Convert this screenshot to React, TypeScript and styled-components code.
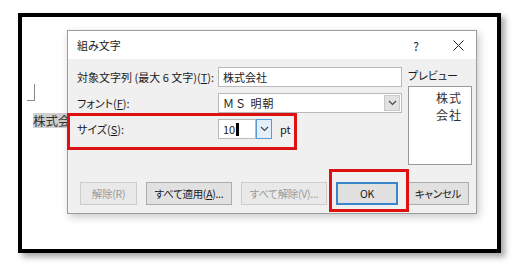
import React from "react";
import styled, { createGlobalStyle } from "styled-components";

const Global = createGlobalStyle`
  html, body { margin: 0; padding: 0; background: #ffffff; }
  body { font-family: "Noto Sans CJK JP", "Noto Sans", sans-serif; }
  * { box-sizing: border-box; }
`;

const Page = styled.div`
  width: 522px;
  height: 264px;
  padding: 13px 0 0 18px;
`;

const Frame = styled.div`
  position: relative;
  width: 483px;
  height: 240px;
  border: 4px solid #000;
  background: #fff;
  box-shadow: 4px 4px 6px rgba(0, 0, 0, 0.35);
  display: flex;
  align-items: flex-start;
`;

const DocColumn = styled.div`
  width: 45px;
  flex: none;
  padding-top: 67px;
  display: flex;
  flex-direction: column;
  align-items: flex-start;
`;

const CropMark = styled.div`
  width: 8px;
  height: 17px;
  margin-left: 5px;
  border-right: 1px solid #8a8a8a;
  border-bottom: 1px solid #8a8a8a;
`;

const DocText = styled.div`
  margin-top: 12px;
  margin-left: 11px;
  height: 15px;
  background: #cfcfcf;
  font-size: 12.5px;
  line-height: 15px;
  color: #333;
  white-space: nowrap;
`;

const Dialog = styled.div`
  position: relative;
  z-index: 1;
  margin-top: 13px;
  width: 410px;
  height: 184px;
  border: 1px solid #9c9c9c;
  background: #f0f0f0;
  box-shadow: 2px 3px 8px rgba(0, 0, 0, 0.22);
  display: flex;
  flex-direction: column;
  font-size: 11px;
  font-feature-settings: "palt";
  color: #1a1a1a;
`;

const TitleBar = styled.div`
  height: 28px;
  background: #fff;
  display: flex;
  align-items: center;
  padding: 0 0 0 9px;
`;

const Title = styled.div`
  flex: 1;
  color: #222;
`;

const TitleButton = styled.div<{ $w: number }>`
  width: ${(p) => p.$w}px;
  height: 28px;
  display: flex;
  align-items: center;
  justify-content: center;
  font-size: 12px;
  color: #222;
`;

const Body = styled.div`
  flex: 1;
  display: flex;
  flex-direction: column;
  padding: 8px 4px 8px 9px;
`;

const Main = styled.div`
  display: flex;
  align-items: flex-start;
`;

const Form = styled.div`
  display: grid;
  grid-template-columns: 141px 184px;
  grid-auto-rows: 20px;
  row-gap: 6px;
  align-items: center;
`;

const Label = styled.div`
  white-space: nowrap;
`;

const Key = styled.span`
  text-decoration: underline;
`;

const TextBox = styled.div<{ $w?: number }>`
  height: 20px;
  width: ${(p) => (p.$w ? `${p.$w}px` : "100%")};
  background: #fff;
  border: 1px solid #b9b9b9;
  display: flex;
  align-items: center;
  padding-left: 4px;
  white-space: nowrap;
`;

const Combo = styled(TextBox)`
  padding-right: 1px;
  justify-content: space-between;
  letter-spacing: 1px;
  font-feature-settings: normal;
`;

const DropButton = styled.div<{ $active?: boolean }>`
  width: 16px;
  height: ${(p) => (p.$active ? "20px" : "16px")};
  background: ${(p) => (p.$active ? "#e3effa" : "#e2e2e2")};
  border: 1px solid ${(p) => (p.$active ? "#5b9bd5" : "#c9c9c9")};
  display: flex;
  align-items: center;
  justify-content: center;
  flex: none;
`;

const SizeRow = styled.div`
  display: flex;
  align-items: center;
`;

const Caret = styled.span`
  display: inline-block;
  width: 3px;
  height: 13px;
  background: #000;
  margin-left: 1px;
`;

const Unit = styled.span`
  margin-left: 8px;
`;

const Preview = styled.div`
  margin-left: 6px;
  display: flex;
  flex-direction: column;
`;

const PreviewLabel = styled.div`
  height: 17px;
  line-height: 17px;
`;

const PreviewBox = styled.div`
  margin-top: 2px;
  width: 64px;
  height: 79px;
  background: #fff;
  border: 1px solid #9a9a9a;
  padding: 2px 0 0 27px;
  font-size: 12px;
  line-height: 17px;
  letter-spacing: 1px;
  font-feature-settings: normal;
  color: #333;
`;

const Buttons = styled.div`
  margin-top: auto;
  margin-left: 3px;
  display: flex;
  gap: 9px;
`;

const Button = styled.div<{ $w: number; $disabled?: boolean; $default?: boolean }>`
  width: ${(p) => p.$w}px;
  height: 23px;
  display: flex;
  align-items: center;
  justify-content: center;
  white-space: nowrap;
  font-size: 10.5px;
  letter-spacing: -0.3px;
  background: ${(p) => (p.$disabled ? "#e9e9e9" : "#e1e1e1")};
  border: ${(p) => (p.$default ? "2px solid #3a86cc" : p.$disabled ? "1px solid #cdcdcd" : "1px solid #adadad")};
  color: ${(p) => (p.$disabled ? "#9a9a9a" : "#1a1a1a")};
`;

const Highlight = styled.div<{ $x: number; $y: number; $w: number; $h: number }>`
  position: absolute;
  left: ${(p) => p.$x}px;
  top: ${(p) => p.$y}px;
  width: ${(p) => p.$w}px;
  height: ${(p) => p.$h}px;
  border: 3px solid #dd1111;
  z-index: 2;
  pointer-events: none;
`;

const Chevron = () => (
  <svg width="9" height="6" viewBox="0 0 9 6">
    <path d="M1 1 L4.5 4.5 L8 1" fill="none" stroke="#444" strokeWidth="1.1" />
  </svg>
);

const CloseIcon = () => (
  <svg width="11" height="11" viewBox="0 0 11 11">
    <path d="M0.5 0.5 L10.5 10.5 M10.5 0.5 L0.5 10.5" stroke="#222" strokeWidth="1" />
  </svg>
);

export default function App() {
  return (
    <>
      <Global />
      <Page>
        <Frame>
          <DocColumn>
            <CropMark />
            <DocText>株式会</DocText>
          </DocColumn>
          <Dialog>
            <TitleBar>
              <Title>組み文字</Title>
              <TitleButton $w={48}>?</TitleButton>
              <TitleButton $w={36}>
                <CloseIcon />
              </TitleButton>
            </TitleBar>
            <Body>
              <Main>
                <Form>
                  <Label>
                    対象文字列 (最大 6 文字)(<Key>T</Key>):
                  </Label>
                  <TextBox>株式会社</TextBox>
                  <Label>
                    フォント(<Key>F</Key>):
                  </Label>
                  <Combo>
                    <span>ＭＳ 明朝</span>
                    <DropButton>
                      <Chevron />
                    </DropButton>
                  </Combo>
                  <Label>
                    サイズ(<Key>S</Key>):
                  </Label>
                  <SizeRow>
                    <TextBox $w={38}>
                      10
                      <Caret />
                    </TextBox>
                    <DropButton $active>
                      <Chevron />
                    </DropButton>
                    <Unit>pt</Unit>
                  </SizeRow>
                </Form>
                <Preview>
                  <PreviewLabel>プレビュー</PreviewLabel>
                  <PreviewBox>
                    株式
                    <br />
                    会社
                  </PreviewBox>
                </Preview>
              </Main>
              <Buttons>
                <Button $w={57} $disabled>
                  解除(R)
                </Button>
                <Button $w={86}>
                  すべて適用(<Key>A</Key>)...
                </Button>
                <Button $w={86} $disabled>
                  すべて解除(V)...
                </Button>
                <Button $w={62} $default>
                  OK
                </Button>
                <Button $w={62}>キャンセル</Button>
              </Buttons>
            </Body>
          </Dialog>
          <Highlight $x={45} $y={96} $w={230} $h={37} />
          <Highlight $x={307} $y={152} $w={80} $h={43} />
        </Frame>
      </Page>
    </>
  );
}
